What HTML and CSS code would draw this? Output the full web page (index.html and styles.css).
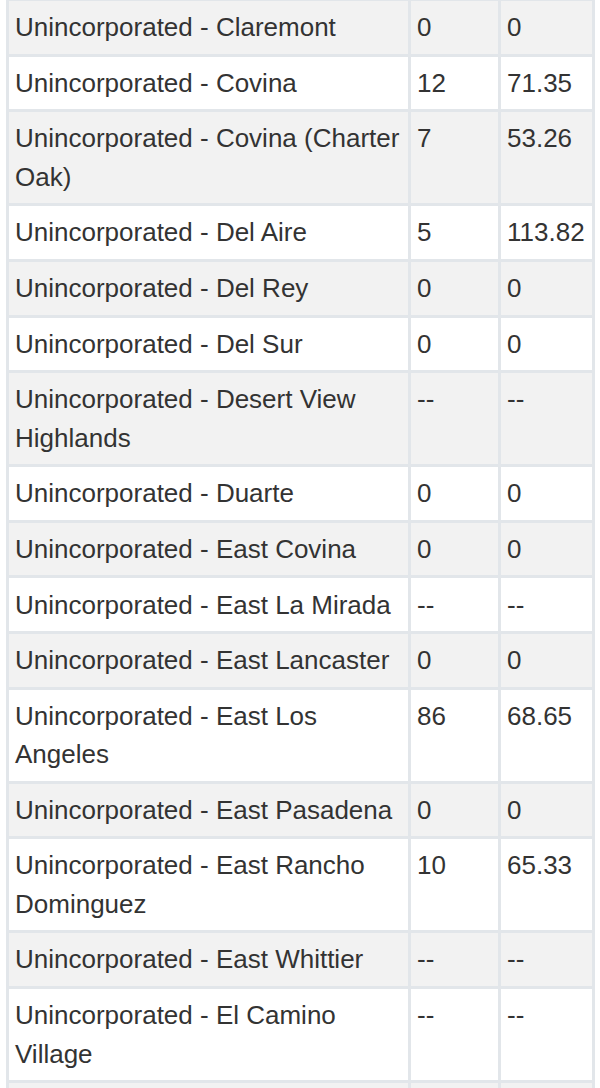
FILE: index.html
```html
<!DOCTYPE html>
<html>
<head>
<meta charset="utf-8">
<link rel="stylesheet" href="styles.css">
</head>
<body>
<table class="data">
<tbody>
<tr class="odd"><td>Unincorporated - Claremont</td><td>0</td><td>0</td></tr>
<tr><td>Unincorporated - Covina</td><td>12</td><td>71.35</td></tr>
<tr class="odd"><td>Unincorporated - Covina (Charter Oak)</td><td>7</td><td>53.26</td></tr>
<tr><td>Unincorporated - Del Aire</td><td>5</td><td>113.82</td></tr>
<tr class="odd"><td>Unincorporated - Del Rey</td><td>0</td><td>0</td></tr>
<tr><td>Unincorporated - Del Sur</td><td>0</td><td>0</td></tr>
<tr class="odd"><td>Unincorporated - Desert View Highlands</td><td>--</td><td>--</td></tr>
<tr><td>Unincorporated - Duarte</td><td>0</td><td>0</td></tr>
<tr class="odd"><td>Unincorporated - East Covina</td><td>0</td><td>0</td></tr>
<tr><td>Unincorporated - East La Mirada</td><td>--</td><td>--</td></tr>
<tr class="odd"><td>Unincorporated - East Lancaster</td><td>0</td><td>0</td></tr>
<tr><td>Unincorporated - East Los Angeles</td><td>86</td><td>68.65</td></tr>
<tr class="odd"><td>Unincorporated - East Pasadena</td><td>0</td><td>0</td></tr>
<tr><td>Unincorporated - East Rancho Dominguez</td><td>10</td><td>65.33</td></tr>
<tr class="odd"><td>Unincorporated - East Whittier</td><td>--</td><td>--</td></tr>
<tr><td>Unincorporated - El Camino Village</td><td>--</td><td>--</td></tr>
<tr class="odd filler"><td></td><td></td><td></td></tr>
</tbody>
</table>
</body>
</html>
```
FILE: styles.css
```css
html, body {
  margin: 0;
  padding: 0;
  background: #ffffff;
}
body {
  overflow: hidden;
  height: 1088px;
}
.data {
  border-collapse: collapse;
  margin: -2px 0 0 6px;
  width: 589px;
  table-layout: fixed;
  font-family: "Liberation Sans", Arial, sans-serif;
  font-size: 26px;
  line-height: 38.4px;
  color: #333333;
}
.data td {
  border: 3px solid #e2e6ea;
  padding: 7.12px 6px;
  vertical-align: top;
  text-align: left;
}
.data td:nth-child(1) { width: 387px; }
.data td:nth-child(2) { width: 75px; }
.data td:nth-child(3) { width: auto; }
.data tr.odd td {
  background: #f2f2f2;
}
.data tr.filler td {
  height: 38.4px;
}
```
